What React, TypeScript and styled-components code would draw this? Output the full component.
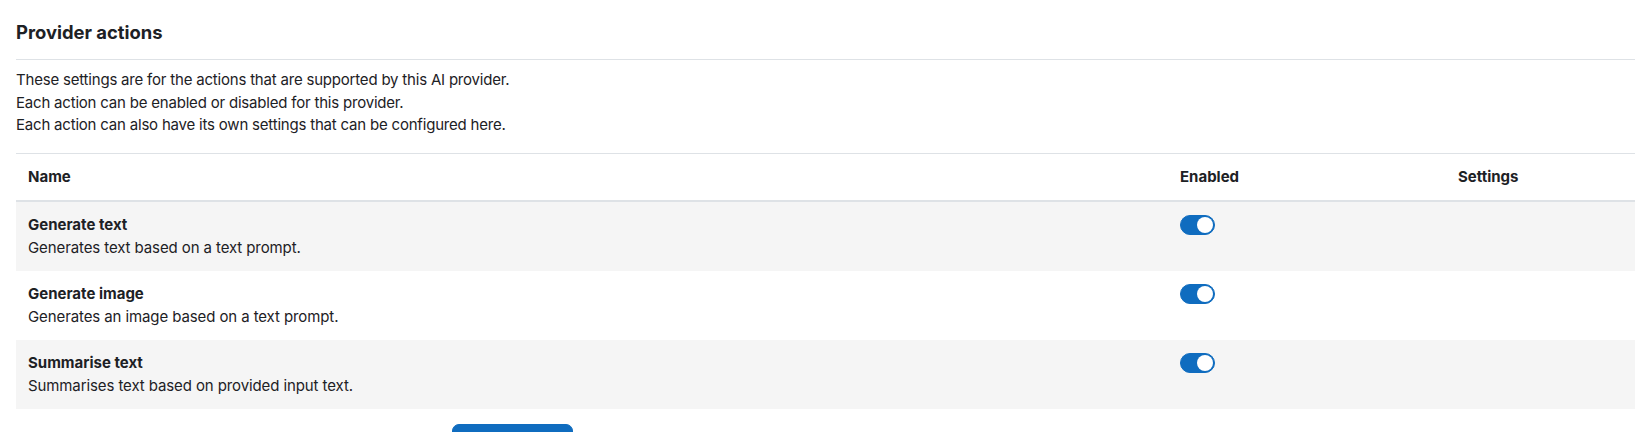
import React from "react";
import styled, { createGlobalStyle } from "styled-components";

const GlobalStyle = createGlobalStyle`
  html, body {
    margin: 0;
    padding: 0;
    background: #fff;
    overflow: hidden;
  }
  body {
    font-family: Inter, "Liberation Sans", Arial, sans-serif;
    font-size: 15px;
    line-height: 1.5;
    color: #1d2125;
  }
`;

const Page = styled.div`
  padding: 21px 0 0 16px;
  height: 432px;
  box-sizing: border-box;
`;

const SectionHeader = styled.div`
  border-bottom: 1px solid #dee2e6;
  padding-bottom: 16px;
`;

const Heading = styled.h3`
  margin: 0;
  font-size: 18.4px;
  font-weight: 700;
  line-height: 1.2;
`;

const Intro = styled.p`
  margin: 9px 0 16px;
  letter-spacing: -0.2px;
`;

const Table = styled.table`
  width: 100%;
  border-collapse: collapse;
  table-layout: fixed;
`;

const HeadCell = styled.th<{ $width?: number }>`
  box-sizing: border-box;
  text-align: left;
  font-weight: 700;
  padding: 12px;
  border-top: 1px solid #dee2e6;
  border-bottom: 2px solid #dee2e6;
  width: ${(p) => (p.$width ? `${p.$width}px` : "auto")};
`;

const Row = styled.tr<{ $striped: boolean }>`
  background: ${(p) => (p.$striped ? "#f5f5f5" : "#fff")};
  & + & > td {
    border-top: 1px solid #dee2e6;
  }
`;

const Cell = styled.td`
  padding: 12px;
  vertical-align: top;
`;

const ActionName = styled.div`
  font-weight: 700;
`;

const Description = styled.div`
  letter-spacing: -0.1px;
`;

const Switch = styled.span<{ $on: boolean }>`
  display: block;
  margin-top: 1px;
  width: 35px;
  height: 20px;
  box-sizing: border-box;
  border-radius: 10px;
  background: ${(p) => (p.$on ? "#0f6cbf" : "#fff")};
  border: 1px solid ${(p) => (p.$on ? "#0f6cbf" : "#8f959e")};
  position: relative;

  &::after {
    content: "";
    position: absolute;
    top: 1px;
    left: ${(p) => (p.$on ? "16px" : "1px")};
    width: 16px;
    height: 16px;
    border-radius: 50%;
    background: #fff;
  }
`;

const FormFooter = styled.div`
  display: grid;
  grid-template-columns: 436px 1fr;
  margin-top: 15px;
`;

const PrimaryButton = styled.button`
  justify-self: start;
  font-family: inherit;
  font-size: 15px;
  line-height: 1.5;
  color: #fff;
  background: #0f6cbf;
  border: 1px solid #0f6cbf;
  border-radius: 7px;
  padding: 6px 12px;
  width: 121px;
`;

const actions = [
  { name: "Generate text", desc: "Generates text based on a text prompt." },
  { name: "Generate image", desc: "Generates an image based on a text prompt." },
  { name: "Summarise text", desc: "Summarises text based on provided input text." },
];

export default function App() {
  return (
    <>
      <GlobalStyle />
      <Page>
        <SectionHeader>
          <Heading>Provider actions</Heading>
        </SectionHeader>
        <Intro>
          These settings are for the actions that are supported by this AI provider.
          <br />
          Each action can be enabled or disabled for this provider.
          <br />
          Each action can also have its own settings that can be configured here.
        </Intro>
        <Table>
          <thead>
            <tr>
              <HeadCell $width={1152}>Name</HeadCell>
              <HeadCell $width={278}>Enabled</HeadCell>
              <HeadCell>Settings</HeadCell>
            </tr>
          </thead>
          <tbody>
            {actions.map((a, i) => (
              <Row key={a.name} $striped={i % 2 === 0}>
                <Cell>
                  <ActionName>{a.name}</ActionName>
                  <Description>{a.desc}</Description>
                </Cell>
                <Cell>
                  <Switch $on role="switch" aria-checked="true" />
                </Cell>
                <Cell />
              </Row>
            ))}
          </tbody>
        </Table>
        <FormFooter>
          <span />
          <PrimaryButton>Save changes</PrimaryButton>
        </FormFooter>
      </Page>
    </>
  );
}
